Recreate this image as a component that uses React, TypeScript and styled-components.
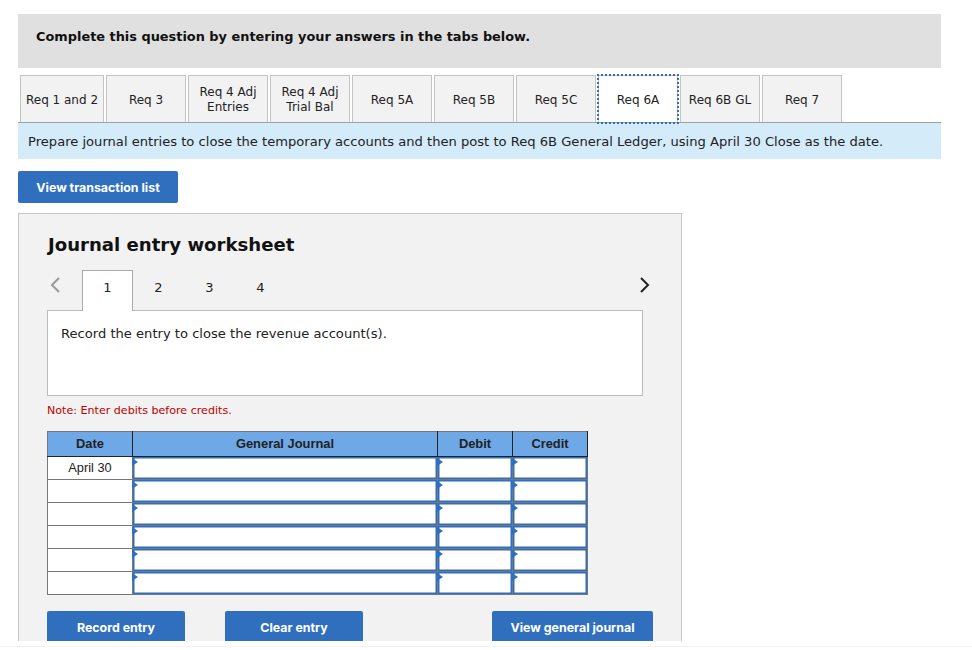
import styled, { createGlobalStyle } from "styled-components";

const GlobalStyle = createGlobalStyle`
  html, body {
    margin: 0;
    padding: 0;
    background: #fff;
  }
  body {
    font-family: "DejaVu Sans", Verdana, sans-serif;
    color: #222;
  }
`;

const Page = styled.div`
  width: 972px;
  height: 650px;
  overflow: hidden;
`;

const Clip = styled.div`
  height: 641px;
  overflow: hidden;
  padding: 14px 31px 0 18px;
  box-sizing: border-box;
`;

const BottomRule = styled.div`
  height: 1px;
  margin-top: 5px;
  background: #f2f2f2;
`;

const Banner = styled.div`
  height: 54px;
  box-sizing: border-box;
  padding: 14px 18px 0;
  background: #e0e0e0;
  color: #111;
  font-size: 12.9px;
  font-weight: 700;
  line-height: 17px;
`;

const TabRow = styled.div`
  display: flex;
  gap: 2px;
  height: 47px;
  margin-top: 7px;
  padding-left: 2px;
  border-bottom: 1px solid #a0a0a0;
`;

const Tab = styled.div<{ $wide?: boolean; $active?: boolean }>`
  position: relative;
  display: flex;
  align-items: center;
  justify-content: center;
  width: ${(p) => (p.$wide ? "84px" : "80px")};
  box-sizing: border-box;
  padding-top: 2px;
  border: 1px solid #c4c4c4;
  border-bottom: 0;
  background: ${(p) => (p.$active ? "#fff" : "#f2f2f2")};
  font-size: 12px;
  line-height: 15px;
  text-align: center;
  color: #222;

  ${(p) =>
    p.$active &&
    `
    &::after {
      content: "";
      position: absolute;
      inset: -2px -2px -2px -2px;
      border: 2px dotted #2f6fbd;
    }
  `}
`;

const Instruction = styled.div`
  height: 36px;
  box-sizing: border-box;
  padding: 11px 10px 0;
  background: #d4ebfa;
  font-size: 13.1px;
  line-height: 15px;
  color: #222;
  white-space: nowrap;
`;

const BlueButton = styled.button<{ $w: number }>`
  display: block;
  width: ${(p) => p.$w}px;
  height: 32px;
  padding: 0;
  border: 0;
  border-radius: 2px;
  background: #2f6fbd;
  color: #fff;
  font-family: "Inter", "Liberation Sans", sans-serif;
  font-size: 12.4px;
  font-weight: 700;
`;

const TransactionButton = styled(BlueButton)`
  margin-top: 12px;
`;

const Panel = styled.section`
  width: 664px;
  box-sizing: border-box;
  margin-top: 10px;
  padding: 19px 28px 0;
  height: 500px;
  border: 1px solid #c8c8c8;
  background: #f2f2f2;
`;

const Title = styled.h2`
  margin: 0;
  padding-left: 1px;
  color: #111;
  font-size: 18.1px;
  font-weight: 700;
  line-height: 24px;
`;

const Pager = styled.div`
  position: relative;
  display: flex;
  align-items: flex-start;
  width: 596px;
  height: 41px;
  margin-top: 13px;
`;

const Arrow = styled.svg<{ $right?: boolean }>`
  position: absolute;
  top: 7px;
  ${(p) => (p.$right ? "right: -8px;" : "left: 2px;")}
`;

const PageTab = styled.div<{ $active?: boolean }>`
  position: relative;
  z-index: 1;
  width: 51px;
  height: ${(p) => (p.$active ? "41px" : "34px")};
  box-sizing: border-box;
  padding-top: 9px;
  border: ${(p) => (p.$active ? "1px solid #aaa" : "1px solid transparent")};
  border-bottom: 0;
  background: ${(p) => (p.$active ? "#fff" : "transparent")};
  font-size: 13px;
  line-height: 16px;
  text-align: center;
  color: #222;
`;

const PageTabs = styled.div`
  display: flex;
  margin-left: 35px;
`;

const EntryBox = styled.div`
  width: 596px;
  height: 86px;
  box-sizing: border-box;
  margin-top: -1px;
  padding: 15px 13px;
  border: 1px solid #bbb;
  background: #fff;
  font-size: 13.1px;
  line-height: 16px;
  color: #222;
`;

const Note = styled.div`
  margin-top: 8px;
  color: #c00000;
  font-size: 11.1px;
  line-height: 14px;
`;

const Journal = styled.table`
  width: 540px;
  margin-top: 13px;
  border-collapse: collapse;
  table-layout: fixed;
  font-family: "Liberation Sans", Arial, sans-serif;
  font-size: 12.8px;
`;

const HeadCell = styled.th`
  height: 25px;
  padding: 0 0 2px;
  box-sizing: border-box;
  border: 1px solid #222;
  border-top-color: #777;
  background: #6fa8e6;
  color: #222;
  font-weight: 700;
  font-size: 12.9px;

  &:first-child {
    border-left-color: #777;
  }
`;

const DateCell = styled.td`
  height: 23px;
  padding: 0 0 2px;
  box-sizing: border-box;
  border: 1px solid #777;
  background: #fff;
  text-align: center;
  color: #222;
`;

const InputCell = styled.td`
  position: relative;
  height: 23px;
  padding: 0;
  box-sizing: border-box;
  border: 1px solid #777;
  box-shadow: inset 0 0 0 1.5px #2f6fbd;
  background: #fff;

  &::before {
    content: "";
    position: absolute;
    top: 1px;
    left: -1px;
    border-style: solid;
    border-width: 4px 0 4px 6px;
    border-color: transparent transparent transparent #2f6fbd;
  }
`;

const Actions = styled.div`
  display: flex;
  width: 606px;
  margin-top: 16px;
`;

const ClearButton = styled(BlueButton)`
  margin-left: 40px;
`;

const JournalButton = styled(BlueButton)`
  margin-left: auto;
`;

const tabs: { label: string[]; wide?: boolean; active?: boolean }[] = [
  { label: ["Req 1 and 2"], wide: true },
  { label: ["Req 3"] },
  { label: ["Req 4 Adj", "Entries"] },
  { label: ["Req 4 Adj", "Trial Bal"] },
  { label: ["Req 5A"] },
  { label: ["Req 5B"] },
  { label: ["Req 5C"] },
  { label: ["Req 6A"], active: true },
  { label: ["Req 6B GL"] },
  { label: ["Req 7"] },
];

const dates = ["April 30", "", "", "", "", ""];

export default function App() {
  return (
    <Page>
      <GlobalStyle />
      <Clip>
        <Banner>Complete this question by entering your answers in the tabs below.</Banner>
        <TabRow>
          {tabs.map((tab) => (
            <Tab key={tab.label.join(" ")} $wide={tab.wide} $active={tab.active}>
              <span>
                {tab.label.map((line, i) => (
                  <span key={line}>
                    {i > 0 && <br />}
                    {line}
                  </span>
                ))}
              </span>
            </Tab>
          ))}
        </TabRow>
        <Instruction>
          Prepare journal entries to close the temporary accounts and then post to Req 6B General
          Ledger, using April 30 Close as the date.
        </Instruction>
        <TransactionButton $w={160}>View transaction list</TransactionButton>
        <Panel>
          <Title>Journal entry worksheet</Title>
          <Pager>
            <Arrow width="12" height="16" viewBox="0 0 12 16">
              <polyline points="10,1 3,8 10,15" fill="none" stroke="#999" strokeWidth="2" />
            </Arrow>
            <PageTabs>
              <PageTab $active>1</PageTab>
              <PageTab>2</PageTab>
              <PageTab>3</PageTab>
              <PageTab>4</PageTab>
            </PageTabs>
            <Arrow $right width="12" height="16" viewBox="0 0 12 16">
              <polyline points="2,1 9,8 2,15" fill="none" stroke="#222" strokeWidth="2" />
            </Arrow>
          </Pager>
          <EntryBox>Record the entry to close the revenue account(s).</EntryBox>
          <Note>Note: Enter debits before credits.</Note>
          <Journal>
            <colgroup>
              <col width="85" />
              <col width="305" />
              <col width="75" />
              <col width="75" />
            </colgroup>
            <thead>
              <tr>
                <HeadCell>Date</HeadCell>
                <HeadCell>General Journal</HeadCell>
                <HeadCell>Debit</HeadCell>
                <HeadCell>Credit</HeadCell>
              </tr>
            </thead>
            <tbody>
              {dates.map((date, i) => (
                <tr key={i}>
                  <DateCell>{date}</DateCell>
                  <InputCell />
                  <InputCell />
                  <InputCell />
                </tr>
              ))}
            </tbody>
          </Journal>
          <Actions>
            <BlueButton $w={138}>Record entry</BlueButton>
            <ClearButton $w={138}>Clear entry</ClearButton>
            <JournalButton $w={161}>View general journal</JournalButton>
          </Actions>
        </Panel>
      </Clip>
      <BottomRule />
    </Page>
  );
}
